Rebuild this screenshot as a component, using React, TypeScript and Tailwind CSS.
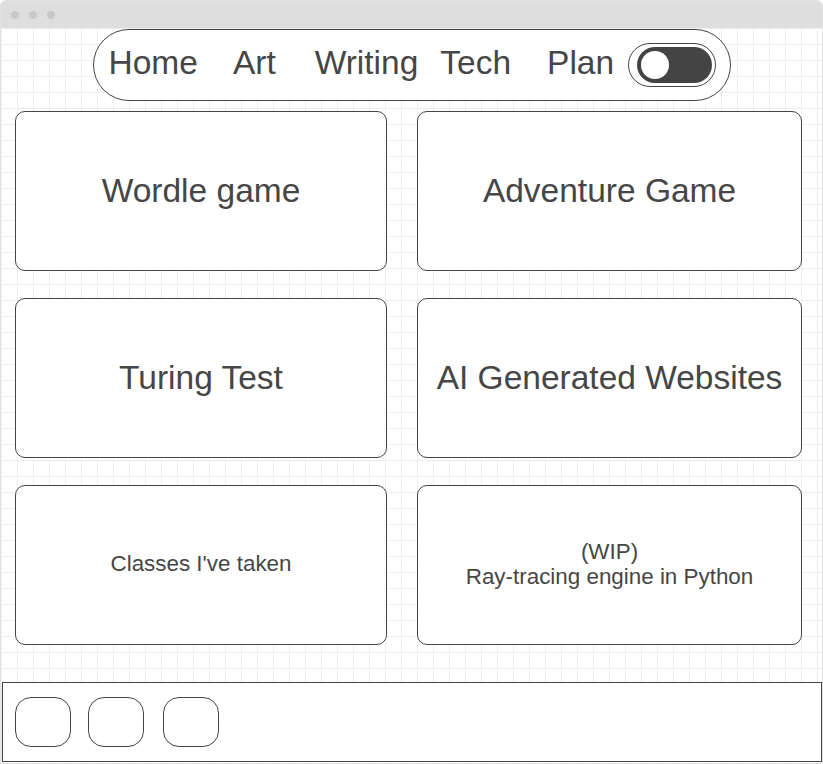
const NAV = [
  { label: "Home", ml: "ml-0" },
  { label: "Art", ml: "ml-[35px]" },
  { label: "Writing", ml: "ml-[39px]" },
  { label: "Tech", ml: "ml-[22px]" },
  { label: "Plan", ml: "ml-[36px]" },
];

function Card({ children, small }: { children: React.ReactNode; small?: boolean }) {
  return (
    <div
      className={
        "flex h-[160px] items-center justify-center rounded-[10px] border border-[#444] bg-white text-center text-[#464646] " +
        (small ? "text-[22.4px] leading-[25px]" : "text-[33.5px]")
      }
    >
      <div className={small ? "mb-[3px]" : ""}>{children}</div>
    </div>
  );
}

export default function App() {
  return (
    <div
      className="flex h-[764px] w-[823px] flex-col overflow-hidden rounded-t-[6px] border border-[#e2e2e2] bg-white"
      style={{ fontFamily: '"Liberation Sans", Arial, sans-serif' }}
    >
      {/* window title bar */}
      <div className="flex h-[27px] shrink-0 items-center gap-[10px] bg-[#dedede] pl-[10px]">
        <span className="size-[8px] rounded-full bg-[#c8c8c8]" />
        <span className="size-[8px] rounded-full bg-[#c8c8c8]" />
        <span className="size-[8px] rounded-full bg-[#c8c8c8]" />
      </div>

      <div className="flex flex-1 flex-col bg-white bg-[linear-gradient(to_right,#ededed_1px,transparent_1px),linear-gradient(to_bottom,#ededed_1px,transparent_1px)] bg-[size:16px_16px] bg-[position:0px_0px]">
        {/* nav pill */}
        <nav className="mx-auto mt-[1px] flex h-[72px] w-[638px] items-center rounded-full border border-[#444] bg-white pl-[15px] text-[33.5px] text-[#464646]">
          {NAV.map((n) => (
            <span key={n.label} className={n.ml + " mb-[3px]"}>
              {n.label}
            </span>
          ))}
          <div className="ml-[14px] flex h-[44px] w-[88px] items-center rounded-full border border-[#444] bg-white pr-[3px] pl-[8px]">
            <div className="flex h-[36px] w-[75px] items-center rounded-full bg-[#444] pl-[4px]">
              <span className="size-[28px] rounded-full bg-white" />
            </div>
          </div>
        </nav>

        {/* project cards */}
        <div className="mt-[10px] ml-[14px] grid grid-cols-[372px_385px] gap-x-[30px] gap-y-[27px]">
          <Card>Wordle game</Card>
          <Card>Adventure Game</Card>
          <Card>Turing Test</Card>
          <Card>AI Generated Websites</Card>
          <Card small>Classes I've taken</Card>
          <Card small>
            (WIP)
            <br />
            Ray-tracing engine in Python
          </Card>
        </div>

        {/* footer */}
        <div className="mt-auto mb-[1px] ml-[1px] flex h-[80px] items-center border border-[#444] bg-white pl-[12px]">
          <span className="h-[50px] w-[56px] rounded-[16px] border border-[#444]" />
          <span className="ml-[17px] h-[50px] w-[56px] rounded-[16px] border border-[#444]" />
          <span className="ml-[19px] h-[50px] w-[56px] rounded-[16px] border border-[#444]" />
        </div>
      </div>
    </div>
  );
}
